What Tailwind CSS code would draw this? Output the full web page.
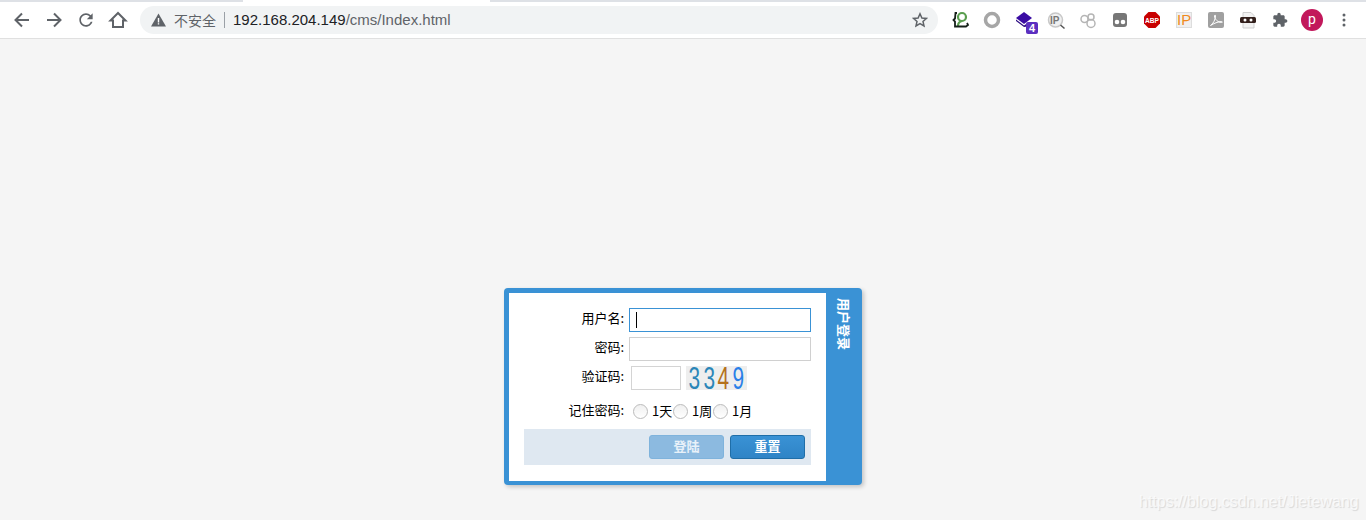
<!DOCTYPE html>
<html lang="zh">
<head>
<meta charset="UTF-8">
<meta name="viewport" content="width=device-width, initial-scale=1.0">
<title>Index</title>
<script src="https://cdn.jsdelivr.net/npm/@tailwindcss/browser@4"></script>
</head>
<body class="relative h-[520px] overflow-hidden bg-[#f5f5f5] font-['Liberation_Sans','Noto_Sans_CJK_SC',sans-serif] text-black">

<!-- browser chrome -->
<div class="h-[39px] bg-white border-b border-[#e0e0e0]">
  <div class="h-[2px] bg-[#dee1e6] flex">
    <div class="w-[243px]"></div>
    <div class="w-[247px] bg-white"></div>
  </div>
  <div class="flex items-center h-[36px] pl-[12px]">
    <svg class="w-[20px] h-[20px] mr-[12px]" viewBox="0 0 20 20" fill="none" stroke="#5f6368" stroke-width="2"><path d="M17 10H4M10 3.500 3.500 10l6.500 6.500"/></svg>
    <svg class="w-[20px] h-[20px] mr-[12px]" viewBox="0 0 20 20" fill="none" stroke="#5f6368" stroke-width="2"><path d="M3 10h13M10 3.500l6.500 6.500-6.500 6.500"/></svg>
    <svg class="w-[20px] h-[20px] mr-[12px]" viewBox="0 0 24 24" fill="#5f6368"><path d="M17.650 6.350C16.200 4.900 14.210 4 12 4c-4.420 0-7.990 3.580-7.990 8s3.570 8 7.990 8c3.730 0 6.840-2.550 7.730-6h-2.080c-.82 2.330-3.040 4-5.650 4-3.310 0-6-2.690-6-6s2.690-6 6-6c1.660 0 3.140.69 4.220 1.780L13 11h7V4l-2.350 2.350z"/></svg>
    <svg class="w-[20px] h-[20px] mr-[12px]" viewBox="0 0 20 20" fill="none" stroke="#5f6368" stroke-width="2"><path d="M10 3 2.500 10.500H5V17h10v-6.500h2.500z"/></svg>
    <div class="flex items-center w-[798px] h-[28px] rounded-full bg-[#f1f3f4] pl-[11px] pr-[10px]">
      <svg class="w-[15px] h-[14px] mr-[8px]" viewBox="0 0 15 14"><path d="M7.500 0.500 15 13.500H0z" fill="#5f6368"/><path d="M6.800 5h1.400v4.500H6.800zM6.800 10.200h1.400v1.400H6.800z" fill="#fff"/></svg>
      <span class="text-[14px] text-[#5f6368] font-['Noto_Sans_CJK_SC',sans-serif]">不安全</span>
      <span class="w-px h-[16px] bg-[#9aa0a6] mx-[8px]"></span>
      <span class="pt-[1px] text-[15px] text-[#202124]">192.168.204.149<span class="text-[#5f6368]">/cms/Index.html</span></span>
      <svg class="w-[16px] h-[16px] ml-auto" viewBox="0 0 16 16" fill="none" stroke="#5f6368" stroke-width="1.500"><path d="M8 1.800l1.900 4.200 4.500.4-3.400 3 1 4.500L8 11.600l-4 2.300 1-4.500-3.400-3 4.500-.4z"/></svg>
    </div>
    <div class="flex items-center ml-[12px] gap-[12px]">
      <!-- extension icons -->
      <svg class="w-[20px] h-[20px]" viewBox="0 0 20 20" fill="none"><circle cx="12" cy="7" r="4" stroke="#5a9e4f" stroke-width="2.200"/><path d="M8 16c0-2.500 1.500-4.500 4-5" stroke="#5a9e4f" stroke-width="2.200"/><path d="M7 3H5.500L5 8.500 3.500 10 5 11.500V16.500H16L18 15l-1-2" stroke="#16201a" stroke-width="1.800"/></svg>
      <svg class="w-[20px] h-[20px]" viewBox="0 0 20 20" fill="none"><circle cx="10" cy="10" r="6.500" stroke="#a6a6a6" stroke-width="3.500"/></svg>
      <div class="relative w-[20px] h-[20px]">
        <svg class="w-[20px] h-[20px]" viewBox="0 0 20 20"><path d="M10 2l8 6-8 6-8-6z" fill="#3a0ca3"/><path d="M2 9.500 10 15.500l3-2v3l-3 .5-8-6z" fill="#2a0a80"/></svg>
        <span class="absolute left-[12px] top-[12px] w-[12px] h-[12px] rounded-[2px] bg-[#5b2fc0] text-white text-[11px] leading-[12px] text-center font-bold">4</span>
      </div>
      <svg class="w-[20px] h-[20px]" viewBox="0 0 20 20" fill="none"><circle cx="9.500" cy="10" r="7" fill="#f0f0f0" stroke="#c8c8c8" stroke-width="1.500"/><path d="M14.500 15l4 3.500" stroke="#555" stroke-width="1.500"/><text x="4" y="13.500" font-size="10" font-weight="700" fill="#777" stroke="none">IP</text></svg>
      <svg class="w-[20px] h-[20px]" viewBox="0 0 20 20" fill="none" stroke="#b5b5b5" stroke-width="1.500"><circle cx="6.500" cy="9" r="3.500"/><circle cx="13" cy="7" r="3"/><circle cx="13" cy="13.500" r="4"/></svg>
      <svg class="w-[20px] h-[20px]" viewBox="0 0 20 20"><rect x="3" y="3" width="14" height="14" rx="3" fill="#777"/><circle cx="7" cy="12" r="2.300" fill="#fff"/><circle cx="13" cy="12" r="2.300" fill="#fff"/></svg>
      <svg class="w-[20px] h-[20px]" viewBox="0 0 20 20"><path d="M6.500 2h7L18 6.500v7L13.500 18h-7L2 13.500v-7z" fill="#c80000"/><text x="10" y="12.800" text-anchor="middle" font-size="7.500" font-weight="700" fill="#fff" textLength="14" lengthAdjust="spacingAndGlyphs">ABP</text></svg>
      <div class="w-[16px] h-[16px] mx-[2px] bg-[#f0f0f0] border border-[#ddd] text-[#f08a1c] text-[15px] leading-[14px] text-center">IP</div>
      <svg class="w-[16px] h-[16px] mx-[2px]" viewBox="0 0 16 16"><rect width="16" height="16" rx="2" fill="#a0a0a0"/><path d="M2.500 13.500c2.500-1.500 5-6 5-9.500 0-1.500-1-1-1 0 0 3 3.500 6.500 7 6.500 1.500 0 1-1 0-1-3 0-8 2-11 4z" fill="none" stroke="#fff" stroke-width="1"/></svg>
      <svg class="w-[20px] h-[20px]" viewBox="0 0 20 20"><path d="M5 2.500h8l3 3v12.500H5z" fill="#f2f2f2" stroke="#cfcfcf"/><rect x="2" y="7" width="16" height="6" rx="1.500" fill="#33201c"/><circle cx="7" cy="10" r="1.500" fill="#fff"/><circle cx="13" cy="10" r="1.500" fill="#fff"/></svg>
      <svg class="w-[16px] h-[16px] mx-[2px]" viewBox="0 0 24 24" fill="#5f6368"><path d="M20.500 11H19V7c0-1.100-.9-2-2-2h-4V3.500C13 2.120 11.880 1 10.500 1S8 2.120 8 3.500V5H4c-1.100 0-1.990.9-1.990 2v3.800H3.500c1.490 0 2.700 1.210 2.700 2.700s-1.210 2.700-2.700 2.700H2V20c0 1.100.9 2 2 2h3.800v-1.500c0-1.490 1.210-2.700 2.700-2.700 1.490 0 2.700 1.210 2.700 2.700V22H17c1.100 0 2-.9 2-2v-4h1.500c1.380 0 2.500-1.120 2.500-2.500S21.880 11 20.500 11z"/></svg>
      <span class="-mx-px w-[22px] h-[22px] rounded-full bg-[#c2185b] text-white text-[14px] leading-[20px] text-center font-['Roboto',sans-serif]">p</span>
      <svg class="ml-[2px] w-[16px] h-[20px]" viewBox="0 0 16 20" fill="#5f6368"><circle cx="8" cy="5" r="1.500"/><circle cx="8" cy="10" r="1.500"/><circle cx="8" cy="15" r="1.500"/></svg>
    </div>
  </div>
</div>

<!-- login box -->
<div class="pt-[249px] pl-[504px]">
  <div class="flex w-[358px] h-[197px] bg-[#3a92d5] rounded-[4px] shadow-[2px_2px_4px_rgba(0,0,0,0.2)] pt-[5px] pb-[4px] pl-[5px]">
    <div class="w-[317px] bg-white pt-[15px] pr-[15px] text-[13px] font-['Noto_Sans_CJK_SC',sans-serif]">
      <div class="flex items-center h-[24px] mb-[5px]">
        <label class="w-[115px] pb-[4px] text-right">用户名:</label>
        <div class="ml-[5px] w-[182px] h-[24px] border border-[#3a92d5] flex items-center pl-[6px]"><span class="w-px h-[16px] bg-black"></span></div>
      </div>
      <div class="flex items-center h-[24px] mb-[5px]">
        <label class="w-[115px] pb-[4px] text-right">密码:</label>
        <input class="ml-[5px] w-[182px] h-[24px] border border-[#d0d0d0]">
      </div>
      <div class="flex items-center h-[24px] mb-[9px]">
        <label class="w-[115px] pb-[4px] text-right">验证码:</label>
        <input class="ml-[7px] w-[50px] h-[24px] border border-[#d4d4d4]">
        <div class="ml-[5px] w-[61px] h-[24px] bg-[#eeeeee] flex items-center text-[32px] leading-[24px] font-['Liberation_Sans',sans-serif] text-center">
          <span class="w-[14.5px] scale-x-[0.65] text-[#2b86b8]">3</span><span class="w-[14.5px] scale-x-[0.65] text-[#2b86b8]">3</span><span class="w-[14.5px] scale-x-[0.65] text-[#b5711c]">4</span><span class="w-[14.5px] scale-x-[0.65] text-[#2a80e8]">9</span>
        </div>
      </div>
      <div class="flex items-center h-[24px] mb-[6px]">
        <label class="w-[115px] pb-[2px] text-right">记住密码:</label>
        <div class="flex items-center ml-[9px]">
          <span class="w-[15px] h-[15px] rounded-full border border-[#bbb] bg-gradient-to-b from-[#f0f0f0] to-white"></span><span class="ml-[4px] w-[21px]">1天</span>
          <span class="w-[15px] h-[15px] rounded-full border border-[#bbb] bg-gradient-to-b from-[#f0f0f0] to-white"></span><span class="ml-[4px] w-[21px]">1周</span>
          <span class="w-[15px] h-[15px] rounded-full border border-[#bbb] bg-gradient-to-b from-[#f0f0f0] to-white"></span><span class="ml-[4px] w-[21px]">1月</span>
        </div>
      </div>
      <div class="flex justify-end gap-[6px] items-center ml-[15px] h-[36px] bg-[#dfe8f1] pr-[6px]">
        <button class="w-[75px] h-[24px] pb-[3px] rounded-[3px] border border-[#7fb3dc] bg-[#8cbae0] text-white/80 text-[13px] leading-none font-bold">登陆</button>
        <button class="w-[75px] h-[24px] pb-[3px] rounded-[3px] border border-[#1f6ea8] bg-gradient-to-b from-[#3a92d5] to-[#2f84c6] text-white text-[13px] leading-none font-bold">重置</button>
      </div>
    </div>
    <div class="flex-1 flex justify-center pt-[5px]">
      <span class="[writing-mode:vertical-rl] [text-orientation:sideways] text-white text-[13px] font-bold font-['Noto_Sans_CJK_SC',sans-serif]">用户登录</span>
    </div>
  </div>
</div>

<div class="absolute left-[1139px] top-[490px] text-[16px] text-white/70 [text-shadow:1px_1px_1px_rgba(0,0,0,0.12)]">https://blog.csdn.net/Jietewang</div>
</body>
</html>
